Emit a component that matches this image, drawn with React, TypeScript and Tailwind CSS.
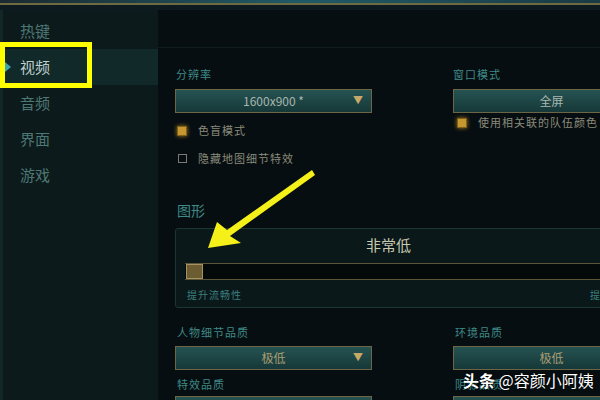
import React from "react";

const font = { fontFamily: '"Noto Sans CJK SC", "Noto Sans", sans-serif' };

function Dropdown({ value, arrow = true, gold = false }: { value: string; arrow?: boolean; gold?: boolean }) {
  return (
    <div className="relative w-[197px] h-[24px] border border-[#6d6646] bg-gradient-to-b from-[#255352] to-[#163838] flex items-center justify-center shrink-0">
      <span className={`text-[12px] leading-none ${gold ? "text-[#a99c72]" : "text-[#a9b6ae]"}`}>{value}</span>
      {arrow && <span className="absolute right-[8px] top-[5px] text-[10px] leading-none text-[#c7a868]">▼</span>}
    </div>
  );
}

function Check({ on, label }: { on: boolean; label: string }) {
  return (
    <div className="flex items-center gap-[11px]">
      {on ? (
        <div className="w-[10px] h-[10px] bg-[#c6982f] border border-[#7d5f1c] shadow-[0_0_4px_#a07a20]" />
      ) : (
        <div className="w-[9px] h-[9px] border border-[#7a7a70] ml-[1px]" />
      )}
      <span className="text-[11px] leading-none text-[#8a8b7b] tracking-[1px]">{label}</span>
    </div>
  );
}

export default function App() {
  const items = ["热键", "视频", "音频", "界面", "游戏"];
  return (
    <div style={font} className="relative w-[600px] h-[400px] overflow-hidden bg-[#070e11] flex flex-col">
      {/* top strip */}
      <div className="h-[10px] shrink-0 flex flex-col">
        <div className="h-[3px] bg-gradient-to-r from-[#1a2a30] via-[#1f5a66] to-[#1a3a44]" />
        <div className="h-[2px] bg-[#6e6a42]" />
        <div className="h-[5px] bg-[#0d1a1f]" />
      </div>

      <div className="flex flex-1 min-h-0">
        {/* sidebar */}
        <div className="w-[158px] shrink-0 bg-[#0c1a1b] border-l-[3px] border-[#132826] pt-[3px]">
          {items.map((t, i) => (
            <div
              key={t}
              className={`relative h-[36px] flex items-center pl-[17px] text-[15px] ${
                i === 1 ? "bg-[#12292a] text-[#bfcfca]" : "text-[#4e7873]"
              }`}
            >
              {i === 1 && <span className="absolute left-[2px] top-[13px] w-0 h-0 border-y-[5px] border-y-transparent border-l-[6px] border-l-[#3ea6ae]" />}
              {t}
            </div>
          ))}
        </div>

        {/* main */}
        <div className="flex-1 min-w-0 flex flex-col">
          <div className="h-[38px] shrink-0 border-b border-[#0f1c1e]" />
          <div className="pl-[17px] pt-[19px] flex gap-[81px]">
            <div className="w-[197px] shrink-0 flex flex-col">
              <span className="text-[11px] leading-[14px] text-[#3e8a88] pl-[1px] tracking-[1px]">分辨率</span>
              <div className="mt-[8px]"><Dropdown value="1600x900 *" /></div>
              <div className="mt-[12px] pl-[2px]"><Check on label="色盲模式" /></div>
              <div className="mt-[17px] pl-[2px]"><Check on={false} label="隐藏地图细节特效" /></div>
            </div>
            <div className="w-[197px] shrink-0 flex flex-col">
              <span className="text-[11px] leading-[14px] text-[#3e8a88] tracking-[1px]">窗口模式</span>
              <div className="mt-[8px]"><Dropdown value="全屏" arrow={false} /></div>
              <div className="mt-[4px] pl-[4px] whitespace-nowrap"><Check on label="使用相关联的队伍颜色" /></div>
            </div>
          </div>

          <div className="pl-[19px] mt-[37px] text-[14px] leading-[18px] text-[#3e8a88]">图形</div>

          <div className="ml-[17px] mt-[9px] w-[440px] h-[80px] shrink-0 border border-[#1b3634] rounded-[3px] bg-[#0a1819] flex flex-col">
            <div className="text-center text-[15px] leading-[20px] mt-[6px] text-[#c9c8b1] w-[425px]">非常低</div>
            <div className="mt-[8px] ml-[9px] h-[17px] border-y border-[#5a5438] bg-[#040a0a] flex items-center">
              <div className="w-[17px] h-[15px] bg-[#6b5c31] border border-[#aa9260] ml-[1px]" />
            </div>
            <div className="flex justify-between pl-[11px] mt-[9px] text-[10px] leading-[12px] text-[#3a7f7f] tracking-[1px] whitespace-nowrap">
              <span>提升流畅性</span>
              <span className="mr-[-20px]">提升画质</span>
            </div>
          </div>

          <div className="pl-[17px] mt-[17px] flex gap-[81px]">
            <div className="w-[197px] shrink-0 flex flex-col">
              <span className="text-[11px] leading-[14px] text-[#3e8a88] pl-[2px] tracking-[1px]">人物细节品质</span>
              <div className="mt-[7px]"><Dropdown value="极低" gold /></div>
              <span className="mt-[7px] text-[11px] leading-[14px] text-[#3e8a88] pl-[2px] tracking-[1px]">特效品质</span>
              <div className="mt-[5px]"><Dropdown value="极低" gold /></div>
            </div>
            <div className="w-[197px] shrink-0 flex flex-col">
              <span className="text-[11px] leading-[14px] text-[#3e8a88] pl-[2px] tracking-[1px]">环境品质</span>
              <div className="mt-[7px]"><Dropdown value="极低" gold arrow={false} /></div>
              <span className="mt-[7px] text-[11px] leading-[14px] text-[#3e8a88] pl-[2px] tracking-[1px]">阴影品质</span>
              <div className="mt-[5px]"><Dropdown value="极低" gold arrow={false} /></div>
            </div>
          </div>
        </div>
      </div>

      {/* annotation: yellow box */}
      <div className="absolute left-0 top-[42px] w-[92px] h-[46px] border-[5px] border-[#ffff00]" />

      {/* annotation: arrow */}
      <svg className="absolute left-0 top-0 pointer-events-none" width="600" height="400" viewBox="0 0 600 400">
        <polygon points="208,248 217,222 227,230 312,170 315,175 230,236 241,243" fill="#f5f019" />
      </svg>

      {/* watermark */}
      <div className="absolute left-[463px] top-[370px] text-[16px] leading-[21px] text-white whitespace-nowrap [text-shadow:0_0_3px_rgba(0,0,0,0.9)]">
        <span className="font-bold">头条</span> @容颜小阿姨
      </div>
    </div>
  );
}
